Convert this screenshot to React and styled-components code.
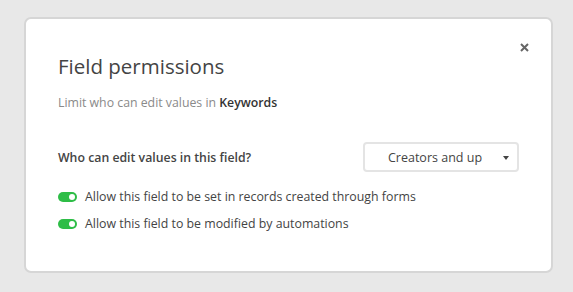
import React from 'react'
import styled, { createGlobalStyle } from 'styled-components'

const GlobalStyle = createGlobalStyle`
  html, body {
    margin: 0;
    padding: 0;
    background: #e8e8e8;
    font-family: "Open Sans", "Noto Sans", sans-serif;
  }
`

const Page = styled.div`
  width: 573px;
  height: 292px;
  padding: 17px 0 0 24px;
  box-sizing: border-box;
`

const Card = styled.div`
  position: relative;
  width: 529px;
  height: 256px;
  box-sizing: border-box;
  background: #fff;
  border: 2px solid #d6d6d6;
  border-radius: 7px;
  padding: 32px 32px 0 32px;
`

const Close = styled.button`
  position: absolute;
  top: 21px;
  right: 20px;
  width: 14px;
  height: 14px;
  padding: 0;
  border: 0;
  background: none;
  display: flex;
  align-items: center;
  justify-content: center;
  cursor: pointer;
`

const Title = styled.h1`
  margin: 0;
  font-size: 20.5px;
  font-weight: 400;
  color: #444;
  line-height: 30px;
`

const Subtitle = styled.p`
  margin: 13px 0 0;
  font-size: 12.3px;
  color: #8a8a8a;
  line-height: 18px;
  strong {
    color: #333;
    font-weight: 600;
  }
`

const Row = styled.div`
  display: flex;
  align-items: center;
  justify-content: space-between;
  margin-top: 30px;
`

const Label = styled.span`
  font-size: 12.3px;
  font-weight: 600;
  color: #444;
`

const Select = styled.button`
  position: relative;
  width: 156px;
  height: 30px;
  box-sizing: border-box;
  border: 2px solid #e4e4e4;
  border-radius: 4px;
  background: #fff;
  font-family: inherit;
  font-size: 12.5px;
  color: #444;
  padding: 0 12px 0 0;
  cursor: pointer;
  &::after {
    content: '';
    position: absolute;
    right: 8px;
    top: 12px;
    border-left: 3.5px solid transparent;
    border-right: 3.5px solid transparent;
    border-top: 4px solid #444;
  }
`

const Options = styled.div`
  display: flex;
  flex-direction: column;
  gap: 9px;
  margin-top: 16px;
`

const Option = styled.label`
  display: flex;
  align-items: center;
  gap: 8px;
  font-size: 12.35px;
  color: #444;
  line-height: 18px;
`

const Toggle = styled.span`
  position: relative;
  width: 19px;
  height: 10px;
  border-radius: 5px;
  background: ${p => (p.on ? '#2ebd47' : '#ccc')};
  flex-shrink: 0;
  &::after {
    content: '';
    position: absolute;
    top: 2px;
    left: ${p => (p.on ? '11px' : '2px')};
    width: 6px;
    height: 6px;
    border-radius: 50%;
    background: #fff;
  }
`

export default function App() {
  return (
    <Page>
      <GlobalStyle />
      <Card>
        <Close aria-label="Close">
          <svg width="9" height="9" viewBox="0 0 9 9">
            <path d="M1 1L8 8M8 1L1 8" stroke="#666" strokeWidth="2" />
          </svg>
        </Close>
        <Title>Field permissions</Title>
        <Subtitle>
          Limit who can edit values in <strong>Keywords</strong>
        </Subtitle>
        <Row>
          <Label>Who can edit values in this field?</Label>
          <Select>Creators and up</Select>
        </Row>
        <Options>
          <Option>
            <Toggle on />
            Allow this field to be set in records created through forms
          </Option>
          <Option>
            <Toggle on />
            Allow this field to be modified by automations
          </Option>
        </Options>
      </Card>
    </Page>
  )
}
